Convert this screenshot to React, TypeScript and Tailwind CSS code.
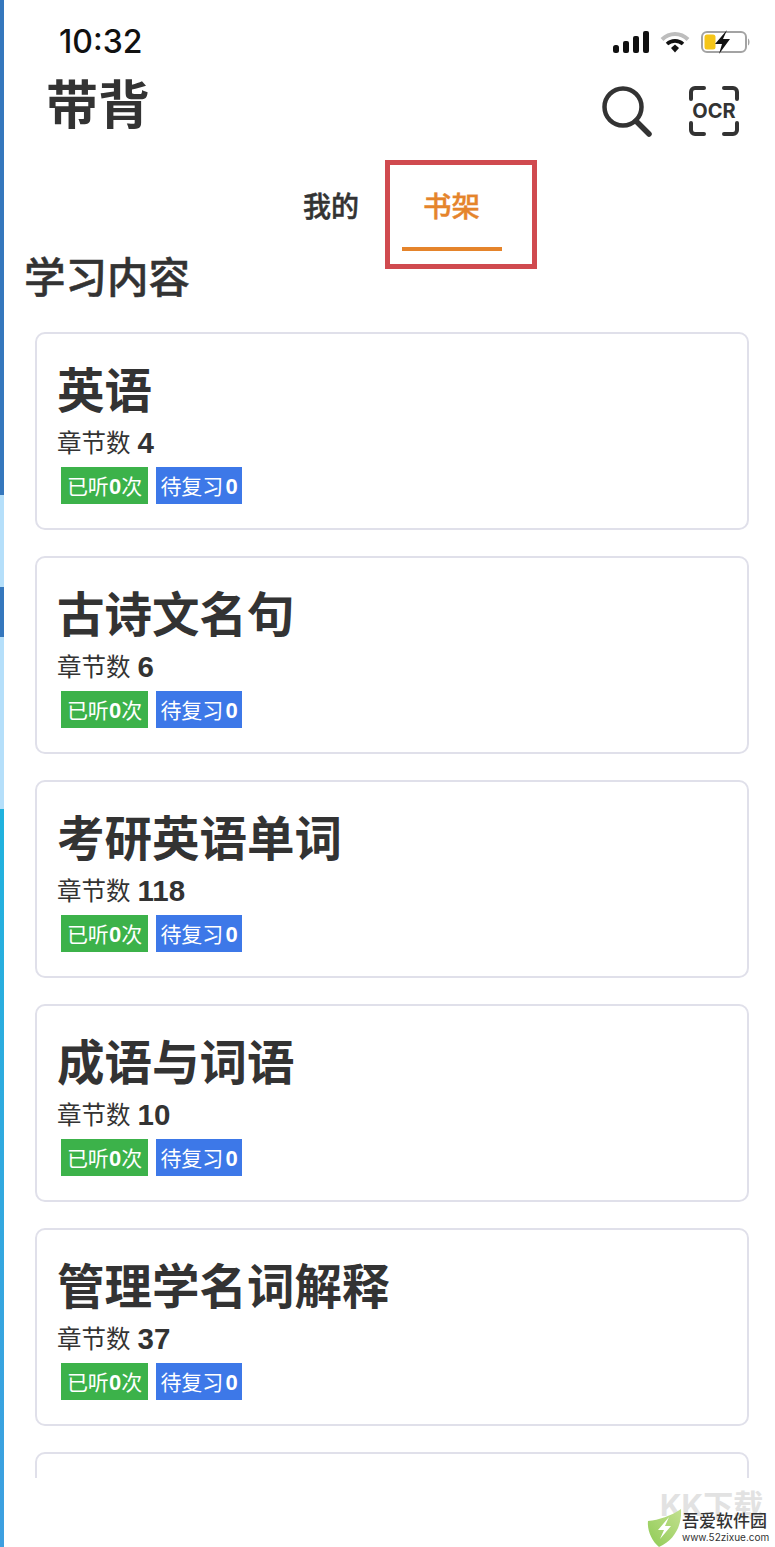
const courses = [
  { name: "英语", chapters: 4 },
  { name: "古诗文名句", chapters: 6 },
  { name: "考研英语单词", chapters: 118 },
  { name: "成语与词语", chapters: 10 },
  { name: "管理学名词解释", chapters: 37 },
];

const font = "font-['Inter','Noto_Sans_CJK_SC',sans-serif]";
const digit = "font-['Liberation_Sans',sans-serif] font-bold";

const StatusIcons = () => (
  <div className="flex items-center gap-[11px]">
    <svg width="36" height="22" viewBox="0 0 36 22">
      <rect x="0" y="14" width="6" height="8" rx="2.5" fill="#111" />
      <rect x="10" y="10" width="6" height="12" rx="2" fill="#111" />
      <rect x="20" y="5" width="6" height="17" rx="2" fill="#111" />
      <rect x="30" y="0" width="6" height="22" rx="2" fill="#111" />
    </svg>
    <svg width="30" height="22" viewBox="0 0 30 22" fill="none">
      <path d="M2 8.5C9.5 1 20.5 1 28 8.5" stroke="#bdbdbd" strokeWidth="4" />
      <path d="M7 13C11.5 8.8 18.5 8.8 23 13" stroke="#111" strokeWidth="3.6" />
      <path d="M11 17l4-3.5 4 3.5-4 4.5z" fill="#111" />
    </svg>
    <svg width="50" height="24" viewBox="0 0 50 24" fill="none">
      <rect x="1" y="2" width="44" height="20" rx="5" stroke="#a3a3a3" strokeWidth="2" />
      <rect x="3.5" y="4.5" width="11" height="15" rx="2.5" fill="#f5c518" />
      <path d="M47 8.5c2 1 2 6 0 7z" fill="#a3a3a3" />
      <path d="M26 0 14 14h7l-3 10 11-15h-7z" fill="#111" />
    </svg>
  </div>
);

const OcrIcon = () => (
  <svg width="50" height="50" viewBox="0 0 50 50" fill="none" stroke="#333" strokeWidth="4" strokeLinecap="round">
    <path d="M2 13V6a4 4 0 0 1 4-4h9" />
    <path d="M35 2h9a4 4 0 0 1 4 4v7" />
    <path d="M2 37v7a4 4 0 0 0 4 4h9" />
    <path d="M48 37v7a4 4 0 0 1-4 4h-9" />
  </svg>
);

const CourseCard = ({ name, chapters }: { name: string; chapters: number }) => (
  <div className="h-[198px] shrink-0 rounded-[10px] border-2 border-[#e0e0ea] bg-white pl-[20px] pt-[28px]">
    <div className="text-[47.5px] leading-[58px] font-bold text-[#333]">{name}</div>
    <div className="mt-[5px] flex items-center gap-[7px] text-[24.5px] leading-[36px] text-[#333]">
      <span>章节数</span>
      <span className={`text-[29.5px] ${digit}`}>{chapters}</span>
    </div>
    <div className="mt-[6px] ml-[4px] flex gap-2 text-[21px] leading-[39px] text-white">
      <div className="flex h-[37px] w-[87px] justify-center bg-[#3cb24a]">
        已听<span className={`text-[22px] ${digit}`}>0</span>次
      </div>
      <div className="flex h-[37px] w-[86px] justify-center bg-[#3d78e8]">
        待复习<span className={`ml-[2px] text-[22px] ${digit}`}>0</span>
      </div>
    </div>
  </div>
);

export default function App() {
  return (
    <div className={`relative flex h-[1547px] w-[775px] overflow-hidden bg-white ${font}`}>
      {/* background page peeking out on the left */}
      <div className="flex w-[4px] shrink-0 flex-col">
        <div className="h-[495px] bg-[#3577bd]" />
        <div className="h-[92px] bg-[#b5dffa]" />
        <div className="h-[50px] bg-[#3577bd]" />
        <div className="h-[172px] bg-[#b5dffa]" />
        <div className="flex-1 bg-linear-to-b from-[#1fb2de] to-[#3d9fe0]" />
      </div>

      <div className="flex min-w-0 flex-1 flex-col">
        <div className="flex h-[76px] shrink-0 items-center justify-between pl-[55px] pr-[24px] pt-[8px]">
          <span className="text-[32px] font-medium text-[#111]">10:32</span>
          <StatusIcons />
        </div>

        <div className="flex h-[64px] shrink-0 items-center justify-between pl-[42px] pr-[36px]">
          <h1 className="mb-[4px] text-[52px] font-bold text-[#333]">带背</h1>
          <div className="flex items-center gap-[37px] pt-[6px]">
            <svg width="52" height="52" viewBox="0 0 52 52" fill="none" stroke="#333" strokeLinecap="round">
              <circle cx="23" cy="22" r="18.5" strokeWidth="4.5" />
              <path d="M36 36l13 13" strokeWidth="5.5" />
            </svg>
            <div className="relative">
              <OcrIcon />
              <span className="absolute inset-0 flex items-center justify-center text-[20px] font-bold text-[#333]">
                OCR
              </span>
            </div>
          </div>
        </div>

        <div className="mt-[20px] flex h-[109px] shrink-0 pl-[299px]">
          <div className="mt-[27px] mr-[26px] text-[28px] leading-[40px] font-medium text-[#333] [-webkit-text-stroke:0.5px_#333]">
            我的
          </div>
          <div className="flex w-[152px] flex-col items-start border-[5px] border-[#d04a4f] pl-[12px]">
            <div className="mt-[22px] ml-[21px] text-[28.5px] leading-[40px] font-medium text-[#e5842b] [-webkit-text-stroke:0.4px_#e5842b]">
              书架
            </div>
            <div className="mt-[20px] h-[4px] w-[100px] bg-[#e5842b]" />
          </div>
        </div>

        <h2 className="mt-[-17px] pl-[20px] text-[41.5px] leading-[52px] font-medium text-[#333] [-webkit-text-stroke:0.5px_#333]">
          学习内容
        </h2>

        <div className="mt-[28px] flex h-[1146px] flex-col gap-[26px] overflow-hidden pl-[31px] pr-[26px]">
          {courses.map((c) => (
            <CourseCard key={c.name} name={c.name} chapters={c.chapters} />
          ))}
          <div className="h-[198px] shrink-0 rounded-[10px] border-2 border-[#e0e0ea]" />
        </div>
      </div>

      {/* site watermark */}
      <div className="absolute left-[660px] top-[1488px] text-[30px] leading-[34px] font-bold text-[#e2e2e2]">
        KK下载
      </div>
      <div className="absolute left-[647px] top-[1509px]">
        <svg width="35" height="38" viewBox="0 0 35 38">
          <defs>
            <linearGradient id="shield" x1="0" y1="1" x2="1" y2="0">
              <stop offset="0" stopColor="#8fcb55" />
              <stop offset="1" stopColor="#c3e08f" />
            </linearGradient>
          </defs>
          <path d="M1 12C12 11 24 7 34 0c1 16-6 31-22 38C5 32 0 22 1 12z" fill="url(#shield)" />
          <path d="M22 8 11 21h6l-4 9 11-13h-6z" fill="#fff" />
        </svg>
      </div>
      <div className="absolute left-[682px] top-[1511px] flex flex-col text-[#333]">
        <span className="text-[17px] leading-[20px] font-medium">吾爱软件园</span>
        <span className="text-[10px] leading-[13px]">www.52zixue.com</span>
      </div>
    </div>
  );
}
